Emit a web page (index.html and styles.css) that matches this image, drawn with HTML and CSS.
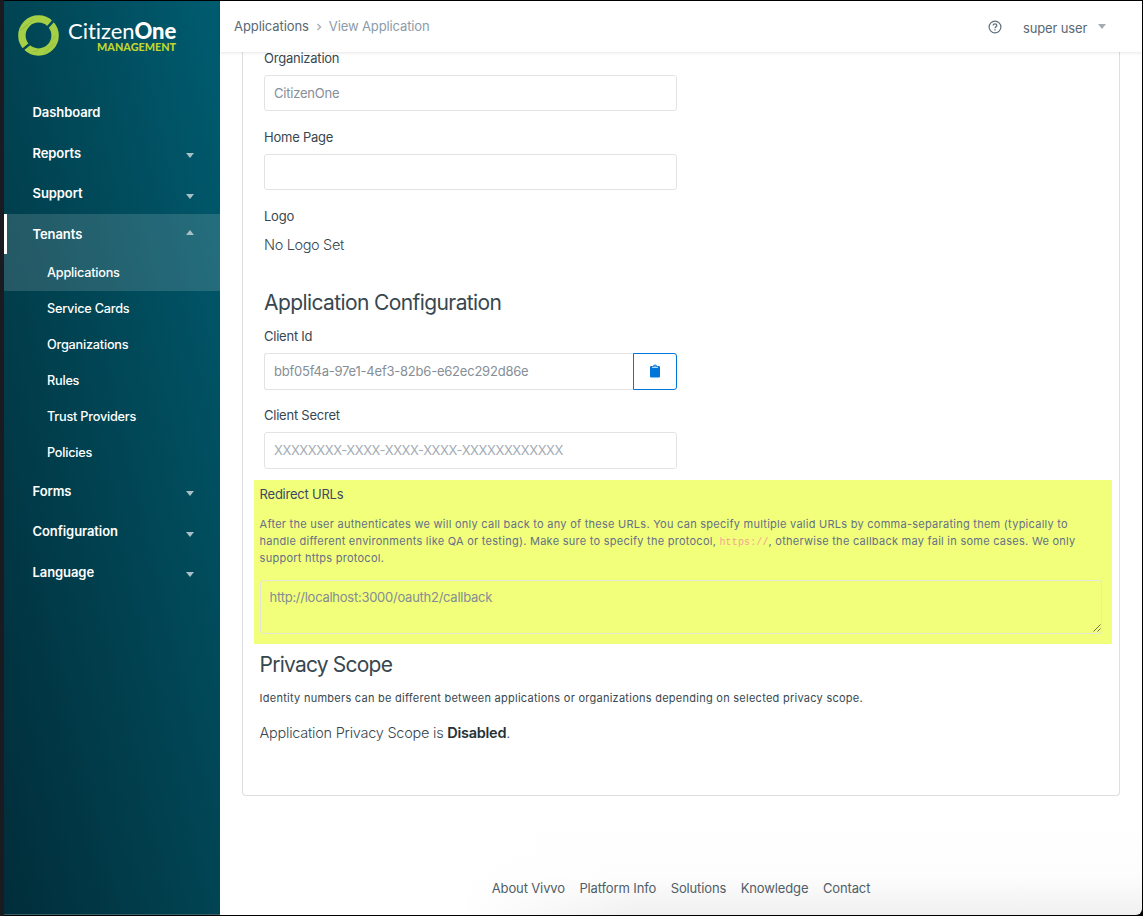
FILE: index.html
```html
<!DOCTYPE html>
<html lang="en">
<head>
<meta charset="utf-8">
<title>View Application</title>
<link rel="stylesheet" href="styles.css">
</head>
<body>
<div class="window">
  <aside class="sidebar">
    <div class="brand">
      <svg class="brand-mark" viewBox="0 0 42 42">
        <circle cx="21" cy="21" r="17" fill="none" stroke="#a5d046" stroke-width="7.600"/>
        <path d="M2 16 9 10M5 15 16 4M27 39 37 29M33 27l6-6M15 38l6-2" stroke="#7fb23c" stroke-width=".6" fill="none"/>
        <path d="M3 37 13 29" stroke="#014556" stroke-width="2.600"/>
        <path d="M30 13 38 4" stroke="#014d5e" stroke-width="2.600"/>
      </svg>
      <div class="brand-text">
        <div class="brand-name">Citizen<b>One</b></div>
        <div class="brand-sub">MANAGEMENT</div>
      </div>
    </div>
    <nav class="menu">
      <a class="item">Dashboard</a>
      <a class="item">Reports<i class="caret"></i></a>
      <a class="item">Support<i class="caret"></i></a>
      <div class="group">
        <a class="item current">Tenants<i class="caret up"></i></a>
        <a class="sub">Applications</a>
      </div>
      <a class="sub">Service Cards</a>
      <a class="sub">Organizations</a>
      <a class="sub">Rules</a>
      <a class="sub">Trust Providers</a>
      <a class="sub">Policies</a>
      <a class="item">Forms<i class="caret"></i></a>
      <a class="item">Configuration<i class="caret"></i></a>
      <a class="item">Language<i class="caret"></i></a>
    </nav>
  </aside>
  <div class="page">
    <header class="topbar">
      <span class="crumb">Applications</span>
      <svg class="chevron" viewBox="0 0 6 8"><path d="M1.500 1 4.500 4 1.500 7" fill="none" stroke="#a9b1b8" stroke-width="1.500"/></svg>
      <span class="crumb here">View Application</span>
      <svg class="help" viewBox="0 0 14 14"><circle cx="7" cy="7" r="5.900" fill="none" stroke="#5f6f7a" stroke-width="1.200"/><path d="M5.200 5.600C5.200 3.100 8.800 3.300 8.800 5.500 8.800 6.800 7 6.900 7 8.300" fill="none" stroke="#5f6f7a" stroke-width="1.300"/><path d="M6.350 9.300h1.300v1.300h-1.300z" fill="#5f6f7a"/></svg>
      <span class="user">super user</span>
      <i class="caret user-caret"></i>
    </header>
    <main class="card">
      <section class="fields">
        <label class="label">Organization</label>
        <div class="input">CitizenOne</div>
        <label class="label">Home Page</label>
        <div class="input"></div>
        <label class="label">Logo</label>
        <p class="no-logo">No Logo Set</p>
        <h2 class="heading config">Application Configuration</h2>
        <label class="label">Client Id</label>
        <div class="input-group">
          <div class="input client">bbf05f4a-97e1-4ef3-82b6-e62ec292d86e</div>
          <button class="copy"><svg viewBox="0 0 10 14"><path d="M1.200 2H3Q3.200.4 5 .4 6.800.4 7 2h1.800q1.200 0 1.200 1.200v9q0 1.300-1.200 1.300H1.200Q0 13.500 0 12.200v-9Q0 2 1.200 2z" fill="#0275d8"/><path d="M2 3.300h6M4.500 2h1" stroke="#fff" stroke-width=".9"/></svg></button>
        </div>
        <label class="label">Client Secret</label>
        <div class="input secret">XXXXXXXX-XXXX-XXXX-XXXX-XXXXXXXXXXXX</div>
      </section>
      <section class="redirect">
        <label class="label">Redirect URLs</label>
        <p class="hint">After the user authenticates we will only call back to any of these URLs. You can specify multiple valid URLs by comma-separating them (typically to<br>handle different environments like QA or testing). Make sure to specify the protocol, <code>https://</code>, otherwise the callback may fail in some cases. We only<br>support https protocol.</p>
        <div class="area">http://localhost:3000/oauth2/callback
          <svg class="grip" viewBox="0 0 8 8"><path d="M.5 7.500 7.500.5M4.500 7.500l3-3" stroke="#6d7250" stroke-width="1"/></svg>
        </div>
      </section>
      <section class="privacy">
        <h2 class="heading">Privacy Scope</h2>
        <p class="hint dark">Identity numbers can be different between applications or organizations depending on selected privacy scope.</p>
        <p class="status">Application Privacy Scope is <b>Disabled</b>.</p>
      </section>
    </main>
    <footer class="footer">
      <a>About Vivvo</a><a>Platform Info</a><a>Solutions</a><a>Knowledge</a><a>Contact</a>
    </footer>
  </div>
</div>
</body>
</html>
```
FILE: styles.css
```css
* { box-sizing: border-box; }
body { margin: 0; background: #000; font-family: Inter, "Liberation Sans", sans-serif; font-size: 13px; color: #37474f; }
h2, p { margin: 0; font-weight: 400; }
.window { display: flex; height: 916px; padding: 1px 1px 1px 0; border-left: 4px solid #191b20; overflow: hidden; }

.sidebar { width: 216px; flex: none; background: linear-gradient(to bottom left, #005c70 0%, #014453 50%, #012d3a 100%); border-bottom: 1px solid #35606b; color: #fff; }
.brand { display: flex; height: 91px; padding: 14px 0 0 14px; }
.brand-mark { width: 41px; height: 41px; }
.brand-text { width: 108px; margin: 6px 0 0 9px; font-family: Lato, sans-serif; }
.brand-name { font-size: 22px; line-height: 20px; letter-spacing: -.05px; white-space: nowrap; }
.brand-name b { font-weight: 900; }
.brand-sub { font-size: 10.800px; line-height: 11px; font-weight: 900; color: #bed62f; text-align: right; }
.menu { display: flex; flex-direction: column; }
.item { display: flex; align-items: center; justify-content: space-between; height: 40.500px; padding: 0 26px 0 28.500px; font-weight: 600; letter-spacing: -.08px; }
.sub { display: flex; align-items: center; height: 36px; padding-left: 43px; font-size: 12.700px; font-weight: 500; letter-spacing: -.22px; }
.group { height: 77px; background: rgba(255,255,255,.14); }
.group .sub { padding-top: 1px; }
.current { border-left: 3px solid #fff; padding-left: 25.500px; }
.caret { width: 0; height: 0; margin-top: 6px; border: 4.500px solid transparent; border-top: 5px solid #a9c0c6; border-bottom: 0; }
.caret.up { margin-top: -3px; border-top: 0; border-bottom: 5px solid #a9c0c6; }

.page { flex: 1; display: flex; flex-direction: column; background: linear-gradient(to right, #fff 240px, rgba(255,255,255,0) 420px), linear-gradient(#fff 820px, #fdfdfd 875px, #f0f0f0 100%); border-radius: 0 0 6px 0; }
.topbar { position: relative; display: flex; align-items: center; height: 51px; flex: none; padding: 0 36px 0 14px; background: #fff; box-shadow: 0 1px 3px rgba(0,0,0,.1); color: #5a6872; letter-spacing: -.08px; }
.crumb { margin-bottom: 1px; }
.chevron { width: 6px; height: 8px; margin: 0 6.500px 0 7.500px; }
.here { color: #8c9ba9; letter-spacing: -.12px; }
.help { width: 14px; height: 14px; margin: 0 21px 0 auto; }
.user { width: 66px; margin-top: 3px; white-space: nowrap; letter-spacing: -.15px; }
.user-caret { margin: 0 0 0 9px; border-top-color: #a5abb0; }

.card { height: 744px; flex: none; margin: 0 22px 0 22px; border: 1px solid #dcdfe2; border-top: 0; border-radius: 0 0 4px 4px; background: #fff; }
.fields { width: 413px; margin-left: 21px; }
.label { display: block; height: 23px; line-height: 13px; letter-spacing: -.23px; }
.input { height: 36px; margin-bottom: 20px; padding: 0 9px; border: 1px solid #e1e4e7; border-radius: 3px; background: #fff; line-height: 35px; letter-spacing: -.22px; color: #868e96; white-space: nowrap; }
.no-logo { height: 56px; padding-top: 2px; line-height: 20px; font-size: 14.500px; font-weight: 300; letter-spacing: -.35px; }
.heading { font-size: 21px; line-height: 28px; letter-spacing: -.6px; }
.config { height: 41px; }
.input-group { display: flex; height: 37px; margin-bottom: 19px; }
.client { flex: 1; height: 37px; border-right: 0; border-radius: 3px 0 0 3px; }
.copy { display: flex; align-items: center; justify-content: center; width: 44px; height: 37px; padding: 0 0 2px; border: 1px solid #0275d8; border-radius: 0 3px 3px 0; background: #fff; }
.copy svg { width: 10px; height: 14px; }
.secret { height: 37px; margin-bottom: 11px; color: #a4acb5; letter-spacing: -.42px; }

.redirect { height: 164px; margin: 0 7px 0 11px; padding: 8px 10px 0 5.600px; background: #f1ff7b; }
.redirect .label { height: 28px; color: #3d4963; }
.hint { font-size: 11px; line-height: 17px; letter-spacing: .26px; color: #666f86; white-space: nowrap; }
.hint code { font-family: "Liberation Mono", monospace; font-size: 10px; line-height: 1; letter-spacing: .13px; color: #f6a493; }
.area { position: relative; height: 54px; margin-top: 13px; padding: 8px 9px; border: 1px solid #e4e6d8; border-radius: 3px; line-height: 17px; letter-spacing: -.26px; color: #858c92; }
.grip { position: absolute; right: 0; bottom: 1px; width: 8px; height: 8px; }
.privacy { margin-left: 16.600px; padding-top: 7px; }
.privacy .heading { letter-spacing: -.78px; }
.dark { margin-top: 11px; color: #37474f; }
.status { margin-top: 16px; font-size: 14.500px; line-height: 20px; font-weight: 300; letter-spacing: -.25px; }
.status b { font-weight: 600; color: #263238; }
.footer { display: flex; justify-content: center; gap: 14.500px; margin-top: 83px; line-height: 18px; letter-spacing: -.13px; color: #505e67; }
```
